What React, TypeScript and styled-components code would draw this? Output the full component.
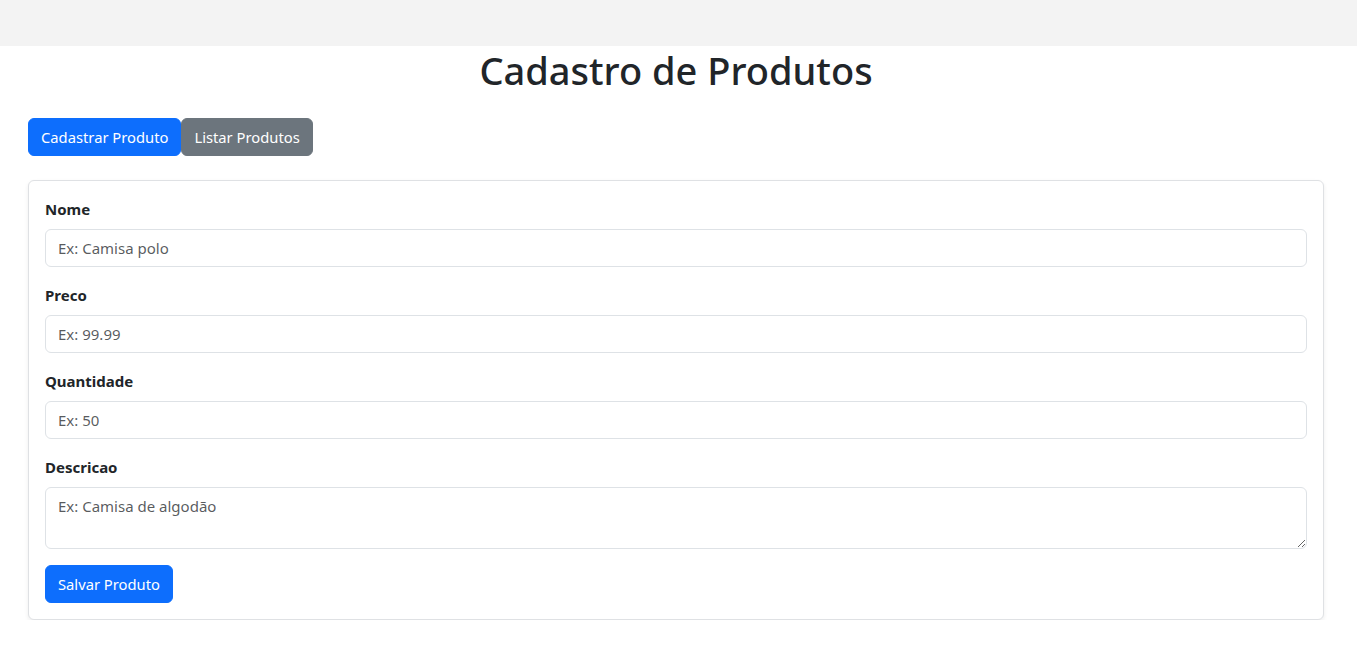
import React from "react";
import styled, { createGlobalStyle } from "styled-components";

const GlobalStyle = createGlobalStyle`
  *, *::before, *::after { box-sizing: border-box; }
  body {
    margin: 0;
    background: #ffffff;
    color: #212529;
    font-family: "Noto Sans", "Open Sans", sans-serif;
    font-size: 15px;
    line-height: 24px;
  }
`;

const TopBar = styled.header`
  height: 46px;
  background: #f3f3f3;
`;

const Main = styled.main`
  padding: 0 33px 0 28px;
`;

const Title = styled.h1`
  margin: 0 0 24px;
  font-size: 38px;
  line-height: 48px;
  font-weight: 500;
  text-align: center;
  color: #212529;
`;

const Tabs = styled.nav`
  display: flex;
`;

const Button = styled.button<{ $variant?: "primary" | "secondary" }>`
  font-family: inherit;
  font-size: 14.75px;
  line-height: 24px;
  padding: 6px 12px;
  border-radius: 6px;
  border: 1px solid ${(p) => (p.$variant === "secondary" ? "#6c757d" : "#0d6efd")};
  background: ${(p) => (p.$variant === "secondary" ? "#6c757d" : "#0d6efd")};
  color: #ffffff;
  cursor: pointer;
`;

const Card = styled.section`
  margin-top: 24px;
  border: 1px solid #dfe1e4;
  border-radius: 6px;
  box-shadow: 0 2px 4px rgba(0, 0, 0, 0.075);
  padding: 16px;
  background: #fff;
`;

const Field = styled.div`
  margin-bottom: 16px;
`;

const Label = styled.label`
  display: block;
  margin-bottom: 8px;
  font-weight: 700;
  color: #212529;
`;

const inputBase = `
  display: block;
  width: 100%;
  font-family: inherit;
  font-size: 15px;
  line-height: 24px;
  padding: 6px 12px;
  color: #212529;
  background: #fff;
  border: 1px solid #dee2e6;
  border-radius: 6px;
  outline: none;
  &::placeholder { color: rgba(33, 37, 41, 0.75); opacity: 1; }
`;

const Input = styled.input`
  ${inputBase}
  height: 38px;
`;

const TextArea = styled.textarea`
  ${inputBase}
  height: 62px;
  resize: vertical;
`;

const fields = [
  { id: "nome", label: "Nome", placeholder: "Ex: Camisa polo" },
  { id: "preco", label: "Preco", placeholder: "Ex: 99.99" },
  { id: "quantidade", label: "Quantidade", placeholder: "Ex: 50" },
];

export default function App() {
  return (
    <>
      <GlobalStyle />
      <TopBar />
      <Main>
        <Title>Cadastro de Produtos</Title>
        <Tabs>
          <Button $variant="primary">Cadastrar Produto</Button>
          <Button $variant="secondary">Listar Produtos</Button>
        </Tabs>
        <Card>
          <form onSubmit={(e) => e.preventDefault()}>
            {fields.map((f) => (
              <Field key={f.id}>
                <Label htmlFor={f.id}>{f.label}</Label>
                <Input id={f.id} placeholder={f.placeholder} />
              </Field>
            ))}
            <Field>
              <Label htmlFor="descricao">Descricao</Label>
              <TextArea id="descricao" rows={2} placeholder="Ex: Camisa de algodão" />
            </Field>
            <Button $variant="primary" type="submit">
              Salvar Produto
            </Button>
          </form>
        </Card>
      </Main>
    </>
  );
}
